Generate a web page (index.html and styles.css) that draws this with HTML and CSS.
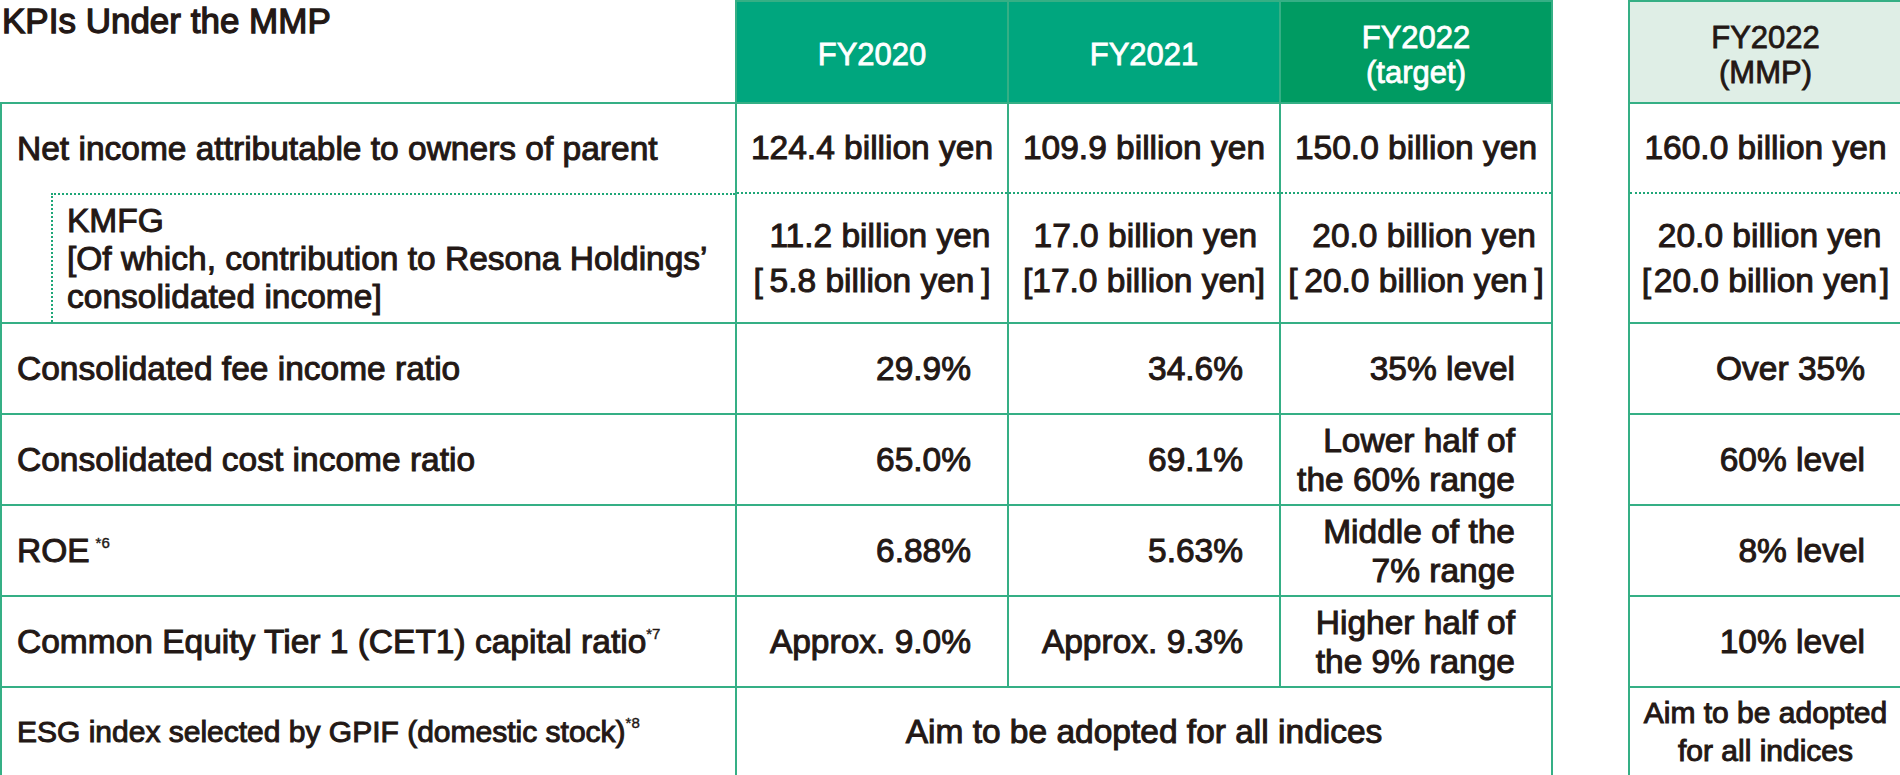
FILE: index.html
```html
<!DOCTYPE html>
<html lang="en">
<head>
    <meta charset="UTF-8">
    <meta name="viewport" content="width=device-width, initial-scale=1.0">
    <title>KPIs Under the MMP</title>
    <link rel="stylesheet" href="styles.css">
</head>
<body>
    <table class="kpi">
        <colgroup>
            <col class="col-label">
            <col class="col-year">
            <col class="col-year">
            <col class="col-year">
            <col class="col-gap">
            <col class="col-mmp">
        </colgroup>
        <thead>
            <tr class="head">
                <th class="title">KPIs Under the MMP</th>
                <th class="year">FY2020</th>
                <th class="year">FY2021</th>
                <th class="year target">FY2022<br>(target)</th>
                <td class="gap"></td>
                <th class="mmp-head">FY2022<br>(MMP)</th>
            </tr>
        </thead>
        <tbody>
            <tr class="row-net">
                <td class="label">Net income attributable to owners of parent</td>
                <td class="yen">124.4 billion yen</td>
                <td class="yen">109.9 billion yen</td>
                <td class="yen">150.0 billion yen</td>
                <td class="gap"></td>
                <td class="yen">160.0 billion yen</td>
            </tr>
            <tr class="row-kmfg">
                <td class="label">
                    <div class="sub-box">
                        <span>KMFG</span>
                        <span>[Of which, contribution to Resona Holdings’</span>
                        <span>consolidated income]</span>
                    </div>
                </td>
                <td class="yen">
                    <div class="pair"><span class="first flush">11.2 billion yen</span><span>[&thinsp;5.8 billion yen&thinsp;]</span></div>
                </td>
                <td class="yen">
                    <div class="pair"><span class="first">17.0 billion yen</span><span>[17.0 billion yen]</span></div>
                </td>
                <td class="yen">
                    <div class="pair"><span class="first">20.0 billion yen</span><span>[&thinsp;20.0 billion yen&thinsp;]</span></div>
                </td>
                <td class="gap"></td>
                <td class="yen">
                    <div class="pair"><span class="first">20.0 billion yen</span><span>[&hairsp;20.0 billion yen&hairsp;]</span></div>
                </td>
            </tr>
            <tr class="row-std">
                <td class="label">Consolidated fee income ratio</td>
                <td class="pct">29.9%</td>
                <td class="pct">34.6%</td>
                <td class="pct">35% level</td>
                <td class="gap"></td>
                <td class="pct">Over 35%</td>
            </tr>
            <tr class="row-std">
                <td class="label">Consolidated cost income ratio</td>
                <td class="pct">65.0%</td>
                <td class="pct">69.1%</td>
                <td class="pct two">Lower half of<br>the 60% range</td>
                <td class="gap"></td>
                <td class="pct">60% level</td>
            </tr>
            <tr class="row-std">
                <td class="label">ROE<sup class="note spaced">*6</sup></td>
                <td class="pct">6.88%</td>
                <td class="pct">5.63%</td>
                <td class="pct two">Middle of the<br>7% range</td>
                <td class="gap"></td>
                <td class="pct">8% level</td>
            </tr>
            <tr class="row-std">
                <td class="label">Common Equity Tier 1 (CET1) capital ratio<sup class="note">*7</sup></td>
                <td class="pct">Approx. 9.0%</td>
                <td class="pct">Approx. 9.3%</td>
                <td class="pct two">Higher half of<br>the 9% range</td>
                <td class="gap"></td>
                <td class="pct">10% level</td>
            </tr>
            <tr class="row-esg">
                <td class="label small">ESG index selected by GPIF (domestic stock)<sup class="note">*8</sup></td>
                <td class="yen" colspan="3">Aim to be adopted for all indices</td>
                <td class="gap"></td>
                <td class="yen esg-mmp">Aim to be adopted<br>for all indices</td>
            </tr>
        </tbody>
    </table>
</body>
</html>
```

FILE: styles.css
```css
body {
    margin: 0;
    font-family: "Liberation Sans", Arial, sans-serif;
    color: #231815;
    background-color: #fff;
}
.kpi {
    width: 1900px;
    table-layout: fixed;
    border-collapse: collapse;
    font-size: 33.5px;
    -webkit-text-stroke-width: 1px;
}
.col-label { width: 735px; }
.col-year { width: 272px; }
.col-gap { width: 77px; }
.col-mmp { width: 273px; }

.kpi th,
.kpi td {
    border: 2px solid #35af85;
    padding: 0;
    font-weight: normal;
    vertical-align: middle;
    white-space: nowrap;
}
.kpi .gap {
    border: none;
}

/* header */
.head {
    height: 102px;
}
.head th {
    font-size: 31px;
    line-height: 35px;
    padding-top: 5px;
    text-align: center;
    -webkit-text-stroke-width: 0.8px;
}
.head .title {
    text-align: left;
    vertical-align: top;
    font-size: 35px;
    line-height: 40px;
    padding: 0 0 0 1px;
    border-top: none;
    border-left: none;
    border-right: none;
    -webkit-text-stroke-width: 1.3px;
}
.year {
    background-color: #00a67e;
    color: #fff;
    border-top: none;
}
.head .target {
    background-color: #009b62;
}
.mmp-head {
    background-color: #dfeee6;
}

/* body rows */
.row-net { height: 90px; }
.row-kmfg { height: 130px; }
.row-std { height: 91px; }
.row-esg { height: 90px; }

.row-net td {
    border-bottom: none;
}
.row-kmfg td {
    border-top: 2px dotted #1ea677;
}
.kpi .row-kmfg .label {
    border-top: none;
    padding: 0 0 0 49px;
}
.kpi .row-kmfg .gap {
    border: none;
}
.sub-box {
    height: 129px;
    box-sizing: border-box;
    border-top: 2px dotted #1ea677;
    border-left: 2px dotted #1ea677;
    padding-left: 14px;
    display: flex;
    flex-direction: column;
    justify-content: center;
    line-height: 38px;
}

.kpi .label {
    text-align: left;
    padding-left: 15px;
}
.kpi .label.small {
    font-size: 30px;
}
.yen {
    text-align: center;
}
.pct {
    text-align: right;
}
.kpi .pct {
    padding-right: 36px;
}
.two {
    line-height: 39px;
}
.pair {
    display: inline-flex;
    flex-direction: column;
    align-items: flex-end;
    line-height: 45px;
}
.pair .first {
    padding-right: 8px;
}
.pair .first.flush {
    padding-right: 0;
}
.esg-mmp {
    font-size: 30px;
    line-height: 38px;
}

.note {
    font-size: 15px;
    vertical-align: 14px;
    line-height: 0;
    -webkit-text-stroke-width: 0.4px;
}
.note.spaced {
    margin-left: 6px;
}
```
